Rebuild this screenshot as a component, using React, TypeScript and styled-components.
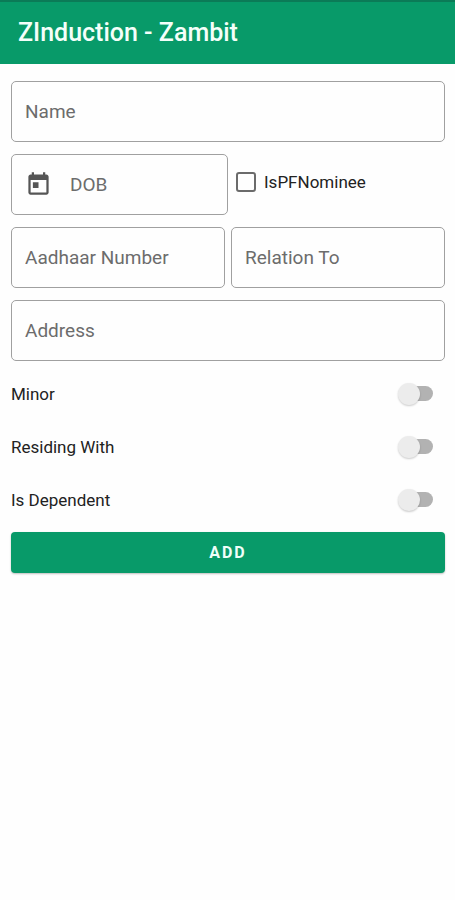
import React from "react";
import styled, { createGlobalStyle } from "styled-components";

const GREEN = "#089a69";

const GlobalStyle = createGlobalStyle`
  *, *::before, *::after { box-sizing: border-box; }
  body {
    margin: 0;
    background: #fefefe;
    color: #222;
    font-family: Roboto, "Noto Sans", sans-serif;
  }
  input, button { font: inherit; }
`;

const AppBar = styled.header`
  display: flex;
  align-items: center;
  height: 64px;
  padding: 0 18px;
  border-top: 2px solid #0b7b57;
  background: ${GREEN};
`;

const Title = styled.h1`
  margin: 0;
  color: #f4fffa;
  font-size: 25px;
  line-height: 28px;
  font-weight: 500;
`;

const Form = styled.form`
  display: flex;
  flex-direction: column;
  gap: 12px;
  padding: 17px 10px 16px 11px;
`;

const Row = styled.div<{ $columns?: number; $gap?: number }>`
  display: grid;
  grid-template-columns: repeat(${(p) => p.$columns ?? 1}, minmax(0, 1fr));
  column-gap: ${(p) => p.$gap ?? 0}px;
`;

const Field = styled.label`
  display: flex;
  align-items: center;
  gap: 18px;
  height: 61px;
  padding: 0 13px;
  border: 1px solid #a0a0a0;
  border-radius: 5px;
  color: #555;

  &:focus-within { border-color: ${GREEN}; }
`;

const TextInput = styled.input`
  flex: 1;
  width: 100%;
  min-width: 0;
  padding: 0;
  border: 0;
  outline: 0;
  background: transparent;
  color: #222;
  font-size: 19px;
  line-height: 24px;

  &::placeholder { color: #6c6c6c; opacity: 1; }
`;

const CheckLabel = styled.label`
  display: flex;
  align-items: center;
  gap: 8px;
  padding: 0 0 5px 8px;
  font-size: 17px;
  line-height: 20px;
`;

const Checkbox = styled.input`
  appearance: none;
  width: 20px;
  height: 20px;
  margin: 0;
  border: 2px solid #6b6b6b;
  border-radius: 3px;

  &:checked { border-color: ${GREEN}; background: ${GREEN}; }
`;

const Switches = styled.div`
  margin: -6px 0;
`;

const SwitchRow = styled.label`
  display: flex;
  align-items: center;
  justify-content: space-between;
  height: 53px;
  padding-right: 12px;
  font-size: 17px;
  line-height: 20px;
`;

const Switch = styled.input`
  appearance: none;
  display: flex;
  align-items: center;
  width: 32px;
  height: 15px;
  margin: 0;
  border-radius: 8px;
  background: #b2b2b2;

  &::before {
    content: "";
    flex: none;
    width: 22px;
    height: 22px;
    margin-left: -3px;
    border-radius: 50%;
    background: #ececec;
    box-shadow: 0 1px 2px rgba(0, 0, 0, 0.2);
  }

  &:checked { justify-content: flex-end; background: #84cdb4; }
  &:checked::before { background: ${GREEN}; }
`;

const AddButton = styled.button`
  height: 41px;
  padding: 0;
  border: 0;
  border-radius: 4px;
  background: ${GREEN};
  box-shadow: 0 1px 2px rgba(0, 0, 0, 0.25);
  color: #effff9;
  font-size: 16px;
  line-height: 20px;
  font-weight: 700;
  letter-spacing: 2px;
`;

const CalendarIcon = () => (
  <svg width="27" height="27" viewBox="0 0 24 24" fill="currentColor" aria-hidden="true">
    <path d="M19 3h-1V1h-2v2H8V1H6v2H5c-1.11 0-1.99.9-1.99 2L3 19c0 1.1.89 2 2 2h14c1.1 0 2-.9 2-2V5c0-1.1-.9-2-2-2zm0 16H5V8h14v11zM7 10h5v5H7z" />
  </svg>
);

const TextField = ({ name, icon }: { name: string; icon?: React.ReactNode }) => (
  <Field>
    {icon}
    <TextInput type="text" placeholder={name} aria-label={name} />
  </Field>
);

const switches = ["Minor", "Residing With", "Is Dependent"];

export default function App() {
  return (
    <>
      <GlobalStyle />
      <AppBar>
        <Title>ZInduction - Zambit</Title>
      </AppBar>
      <Form onSubmit={(e) => e.preventDefault()}>
        <Row>
          <TextField name="Name" />
        </Row>
        <Row $columns={2}>
          <TextField name="DOB" icon={<CalendarIcon />} />
          <CheckLabel>
            <Checkbox type="checkbox" />
            IsPFNominee
          </CheckLabel>
        </Row>
        <Row $columns={2} $gap={6}>
          <TextField name="Aadhaar Number" />
          <TextField name="Relation To" />
        </Row>
        <Row>
          <TextField name="Address" />
        </Row>
        <Switches>
          {switches.map((name) => (
            <SwitchRow key={name}>
              {name}
              <Switch type="checkbox" role="switch" />
            </SwitchRow>
          ))}
        </Switches>
        <AddButton type="submit">ADD</AddButton>
      </Form>
    </>
  );
}
